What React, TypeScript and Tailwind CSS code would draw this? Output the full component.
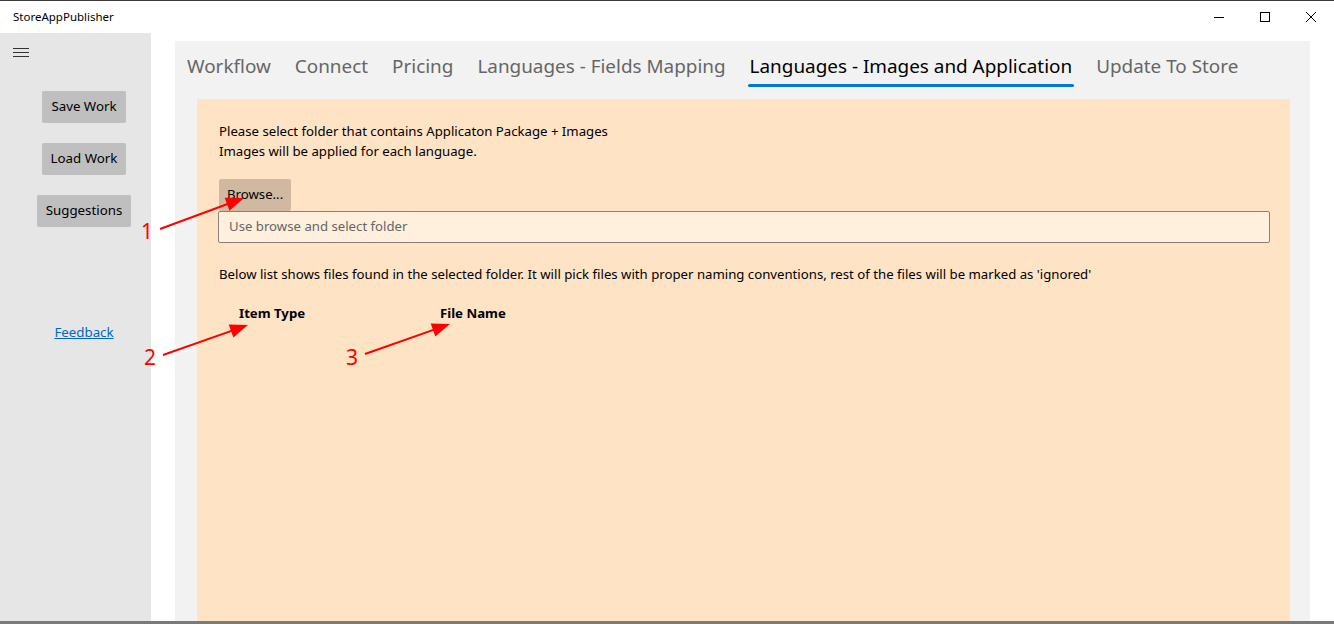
import React from "react";

const tabs = [
  "Workflow",
  "Connect",
  "Pricing",
  "Languages - Fields Mapping",
  "Languages - Images and Application",
  "Update To Store",
];

function Arrow({ x1, y1, x2, y2 }: { x1: number; y1: number; x2: number; y2: number }) {
  const dx = x2 - x1;
  const dy = y2 - y1;
  const len = Math.sqrt(dx * dx + dy * dy);
  const ux = dx / len;
  const uy = dy / len;
  const hl = 18;
  const hw = 7;
  const bx = x2 - ux * hl;
  const by = y2 - uy * hl;
  const pts = `${x2},${y2} ${bx - uy * hw},${by + ux * hw} ${bx + uy * hw},${by - ux * hw}`;
  return (
    <g>
      <line x1={x1} y1={y1} x2={bx + ux * 2} y2={by + uy * 2} stroke="#ff0000" strokeWidth={2} />
      <polygon points={pts} fill="#ff0000" />
    </g>
  );
}

export default function App() {
  const font = { fontFamily: '"Segoe UI", "Noto Sans", sans-serif' };
  return (
    <div
      className="relative w-[1334px] h-[624px] bg-white flex flex-col overflow-hidden border-t border-[#3c3c3c]"
      style={font}
    >
      {/* title bar */}
      <div className="h-[32px] flex items-center justify-between shrink-0">
        <span className="pl-[13px] text-[11.5px] text-black">StoreAppPublisher</span>
        <div className="flex items-center h-full">
          <div className="w-[46px] h-full flex items-center justify-center">
            <div className="w-[10px] h-px bg-black" />
          </div>
          <div className="w-[46px] h-full flex items-center justify-center">
            <div className="w-[10px] h-[10px] border border-black" />
          </div>
          <div className="w-[46px] h-full flex items-center justify-center">
            <svg width="12" height="12" viewBox="0 0 12 12">
              <path d="M1 1L11 11M11 1L1 11" stroke="#000" strokeWidth="1" />
            </svg>
          </div>
        </div>
      </div>

      <div className="flex flex-1 min-h-0">
        {/* sidebar */}
        <div className="w-[151px] bg-[#e6e6e6] flex flex-col shrink-0">
          <div className="pl-[13px] pt-[15px] flex flex-col gap-[3px]">
            <div className="w-[16px] h-px bg-[#333]" />
            <div className="w-[16px] h-px bg-[#333]" />
            <div className="w-[16px] h-px bg-[#333]" />
          </div>
          <div className="pl-[17px] flex flex-col items-center">
            <div className="mt-[34px] flex flex-col items-center gap-[20px]">
              <button className="h-[32px] px-[9px] rounded-[2px] bg-[#bfbfbf] text-[13.3px] text-black">Save Work</button>
              <button className="h-[32px] px-[9px] rounded-[2px] bg-[#bfbfbf] text-[13.3px] text-black">Load Work</button>
              <button className="h-[32px] px-[9px] rounded-[2px] bg-[#bfbfbf] text-[13.3px] text-black">Suggestions</button>
            </div>
            <a className="mt-[96px] text-[13.3px] text-[#0066cc] underline">Feedback</a>
          </div>
        </div>

        <div className="w-[24px] shrink-0" />

        {/* main */}
        <div className="w-[1135px] mt-[8px] bg-[#f2f2f2] flex flex-col shrink-0">
          <div className="h-[58px] flex items-start pl-[12px] gap-[24px] pt-[11px]">
            {tabs.map((t) => {
              const active = t === "Languages - Images and Application";
              return (
                <div key={t} className="flex flex-col items-center">
                  <span className={`text-[18.9px] leading-[28px] ${active ? "text-black" : "text-[#666]"}`}>{t}</span>
                  {active && <div className="mt-[4px] h-[3px] w-[calc(100%+4px)] rounded-full bg-[#0078d7]" />}
                </div>
              );
            })}
          </div>

          <div className="ml-[22px] mr-[20px] flex-1 bg-[#fee3c5] px-[22px] pt-[22px] text-[13.2px] text-black">
            <p className="leading-[20px]">Please select folder that contains Applicaton Package + Images</p>
            <p className="leading-[20px]">Images will be applied for each language.</p>
            <button className="mt-[18px] h-[32px] px-[8px] rounded-[2px] bg-[#d1b8a0] text-[13.2px] text-black">Browse...</button>
            <div className="mt-0 h-[32px] w-[1052px] -ml-px rounded-[2px] border border-[#8a8078] bg-[#fff0de] flex items-center pl-[10px] text-[#666]">
              Use browse and select folder
            </div>
            <p className="mt-[21px] leading-[20px]">
              Below list shows files found in the selected folder. It will pick files with proper naming conventions, rest of the files will be marked as 'ignored'
            </p>
            <div className="mt-[20px] flex font-bold">
              <span className="ml-[20px] w-[201px]">Item Type</span>
              <span>File Name</span>
            </div>
          </div>
        </div>
      </div>
      <div className="h-[3px] bg-[#7a7a7a] shrink-0" />

      {/* annotations */}
      <svg className="absolute inset-0 pointer-events-none" width="1334" height="624">
        <Arrow x1={160} y1={228} x2={244} y2={197} />
        <Arrow x1={163} y1={354} x2={248} y2={324} />
        <Arrow x1={365} y1={353} x2={450} y2={323} />
      </svg>
      <span className="absolute left-[141px] top-[220px] text-[21px] text-[#ff0000] leading-none">1</span>
      <span className="absolute left-[144px] top-[346px] text-[21px] text-[#ff0000] leading-none">2</span>
      <span className="absolute left-[346px] top-[346px] text-[21px] text-[#ff0000] leading-none">3</span>
    </div>
  );
}
